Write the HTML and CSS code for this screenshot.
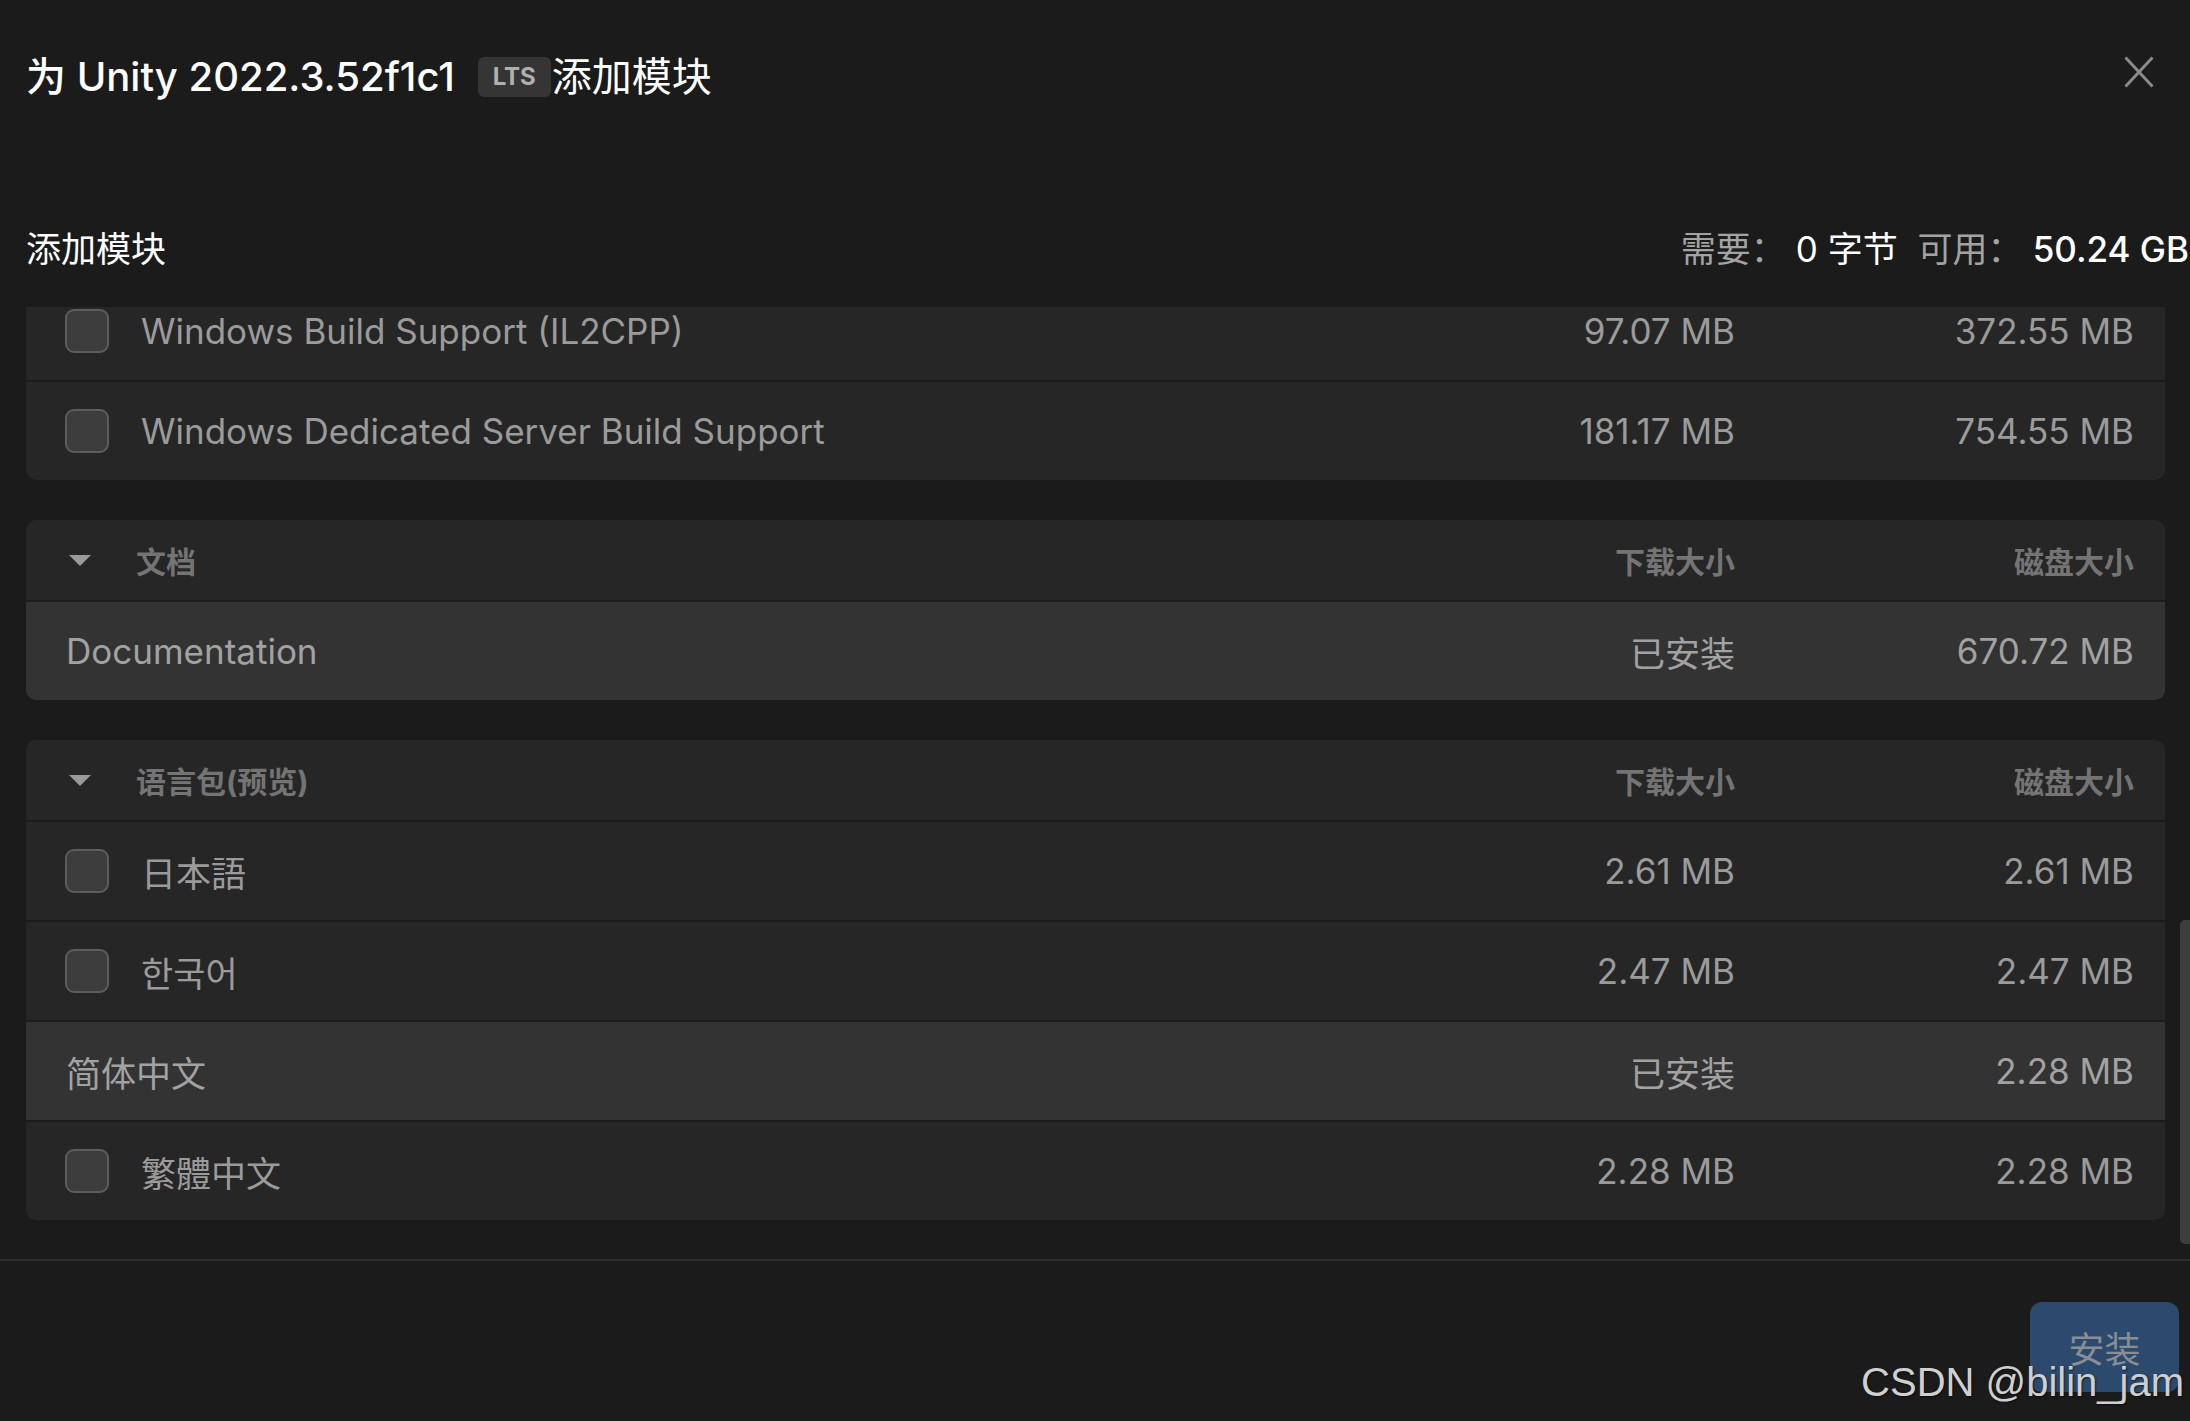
FILE: index.html
```html
<!DOCTYPE html>
<html lang="zh-CN">
<head>
<meta charset="utf-8">
<title>添加模块</title>
<link rel="stylesheet" href="styles.css">
</head>
<body>
<div class="dialog">
  <header class="topbar">
    <h1 class="title">
      <span class="title-main">为 Unity 2022.3.52f1c1</span>
      <span class="badge">LTS</span>
      <span class="title-tail">添加模块</span>
    </h1>
    <button class="close" aria-label="关闭">
      <svg width="30" height="32" viewBox="0 0 30 32"><path d="M1.5 1.5 L28.5 30.5 M28.5 1.5 L1.5 30.5" stroke="#8a8a8a" stroke-width="3" fill="none"/></svg>
    </button>
  </header>

  <div class="section-head">
    <h2 class="section-title">添加模块</h2>
    <div class="stats">
      <span class="stat-label">需要：</span><span class="stat-value">0 字节</span>
      <span class="stat-label second">可用：</span><span class="stat-value strong">50.24 GB</span>
    </div>
  </div>

  <div class="scroll">
    <div class="scroll-content">
      <section class="panel panel-scrolled">
        <div class="row">
          <span class="check"></span>
          <span class="name">Windows Build Support (IL2CPP)</span>
          <span class="col dl">97.07 MB</span>
          <span class="col disk">372.55 MB</span>
        </div>
        <div class="row">
          <span class="check"></span>
          <span class="name">Windows Dedicated Server Build Support</span>
          <span class="col dl">181.17 MB</span>
          <span class="col disk">754.55 MB</span>
        </div>
      </section>

      <section class="panel">
        <div class="panel-head">
          <span class="caret"></span>
          <span class="head-title">文档</span>
          <span class="col dl head-col">下载大小</span>
          <span class="col disk head-col">磁盘大小</span>
        </div>
        <div class="row installed">
          <span class="name">Documentation</span>
          <span class="col dl">已安装</span>
          <span class="col disk">670.72 MB</span>
        </div>
      </section>

      <section class="panel">
        <div class="panel-head">
          <span class="caret"></span>
          <span class="head-title">语言包(预览)</span>
          <span class="col dl head-col">下载大小</span>
          <span class="col disk head-col">磁盘大小</span>
        </div>
        <div class="row">
          <span class="check"></span>
          <span class="name" lang="ja">日本語</span>
          <span class="col dl">2.61 MB</span>
          <span class="col disk">2.61 MB</span>
        </div>
        <div class="row">
          <span class="check"></span>
          <span class="name" lang="ko">한국어</span>
          <span class="col dl">2.47 MB</span>
          <span class="col disk">2.47 MB</span>
        </div>
        <div class="row installed">
          <span class="name">简体中文</span>
          <span class="col dl">已安装</span>
          <span class="col disk">2.28 MB</span>
        </div>
        <div class="row">
          <span class="check"></span>
          <span class="name" lang="zh-TW">繁體中文</span>
          <span class="col dl">2.28 MB</span>
          <span class="col disk">2.28 MB</span>
        </div>
      </section>
    </div>
    <div class="thumb"></div>
  </div>

  <footer class="footer">
    <button class="install" disabled>安装</button>
  </footer>

  <div class="watermark">CSDN @bilin_jam</div>
</div>
</body>
</html>
```

FILE: styles.css
```css
* { box-sizing: border-box; }

html, body {
  margin: 0;
  padding: 0;
  background: #1b1b1b;
}

body {
  font-family: Inter, "Noto Sans CJK SC", "Noto Sans", sans-serif;
  color: #9b9b9b;
}

.dialog {
  position: relative;
  width: 2190px;
  height: 1421px;
  overflow: hidden;
  display: flex;
  flex-direction: column;
}

/* ---------- top bar ---------- */
.topbar {
  height: 228px;
  padding: 53px 36px 0 26px;
  display: flex;
  justify-content: space-between;
  align-items: flex-start;
}

.title {
  margin: 0;
  display: flex;
  align-items: center;
  height: 48px;
  font-size: 40px;
  line-height: 48px;
  font-weight: 500;
  color: #ffffff;
}

.badge {
  display: inline-flex;
  align-items: center;
  justify-content: center;
  width: 73px;
  height: 40px;
  margin: 0 1px 0 23px;
  border-radius: 6px;
  background: #353535;
  color: #b0b0b0;
  font-family: Inter, "Noto Sans", sans-serif;
  font-weight: 700;
  font-size: 24px;
}

.title-tail { font-weight: 400; }

.close {
  margin-top: 3px;
  padding: 0;
  border: 0;
  background: none;
  width: 30px;
  height: 32px;
  line-height: 0;
}

/* ---------- section heading ---------- */
.section-head {
  height: 79px;
  padding-left: 26px;
  display: flex;
  justify-content: space-between;
  align-items: flex-start;
}

.section-title {
  margin: 0;
  font-size: 35px;
  line-height: 42px;
  font-weight: 400;
  color: #ffffff;
}

.stats {
  font-size: 35px;
  line-height: 42px;
  white-space: nowrap;
  margin-right: 1px;
}

.stat-label { color: #a3a3a3; }
.stat-label.second { margin-left: 10px; }
.stat-value { color: #ffffff; font-weight: 400; margin-left: 10px; }
.stat-value.strong { font-weight: 500; }

/* ---------- scroll area ---------- */
.scroll {
  position: relative;
  height: 952px;
  overflow: hidden;
  padding: 0 25px 0 26px;
}

.scroll-content {
  margin-top: -25px;
  display: flex;
  flex-direction: column;
  gap: 40px;
}

.thumb {
  position: absolute;
  right: 0;
  top: 613px;
  width: 10px;
  height: 324px;
  border-radius: 5px 0 0 5px;
  background: #3d3d3d;
}

.panel {
  background: #262626;
  border-radius: 10px;
  overflow: hidden;
}

.panel-scrolled {
  border-top-left-radius: 0;
  border-top-right-radius: 0;
}

.panel-head,
.row {
  display: flex;
  align-items: center;
  padding-right: 31px;
}

.panel-head {
  height: 80px;
  padding-left: 43px;
}

.row {
  height: 98px;
  padding-left: 39px;
  font-size: 35px;
  color: #9b9b9b;
}

.panel-head + .row,
.row + .row {
  height: 100px;
  border-top: 2px solid #1c1c1c;
}

.row.installed {
  background: #333333;
  padding-left: 40px;
  color: #a2a2a2;
}

.caret {
  width: 0;
  height: 0;
  border-left: 11px solid transparent;
  border-right: 11px solid transparent;
  border-top: 11px solid #9a9a9a;
  margin-right: 45px;
}

.head-title {
  flex: 1;
  font-size: 30px;
  font-weight: 700;
  color: #747474;
}

.check {
  flex: none;
  width: 44px;
  height: 44px;
  margin-right: 32px;
  border: 2px solid #5c5c5c;
  border-radius: 9px;
  background: #3c3c3c;
}

.name {
  flex: 1;
  white-space: nowrap;
}

.col {
  flex: none;
  text-align: right;
  white-space: nowrap;
}

.col.dl { width: 400px; }
.col.disk { width: 399px; }

.head-col {
  font-size: 30px;
  font-weight: 700;
  color: #747474;
}

/* ---------- footer ---------- */
.footer {
  flex: 1;
  border-top: 2px solid #303030;
  padding: 41px 11px 0 0;
  display: flex;
  justify-content: flex-end;
  align-items: flex-start;
}

.install {
  width: 149px;
  height: 90px;
  border: 0;
  border-radius: 12px;
  background: #2b4a6e;
  color: #8a8d92;
  font-family: Inter, "Noto Sans CJK SC", sans-serif;
  font-size: 36px;
}

.watermark {
  position: absolute;
  right: 6px;
  bottom: 14px;
  font-family: "Liberation Sans", Arial, sans-serif;
  font-size: 40px;
  line-height: 50px;
  color: #cfcfcf;
  text-shadow: 1px 1px 2px rgba(0,0,0,0.6);
  white-space: nowrap;
}
```
